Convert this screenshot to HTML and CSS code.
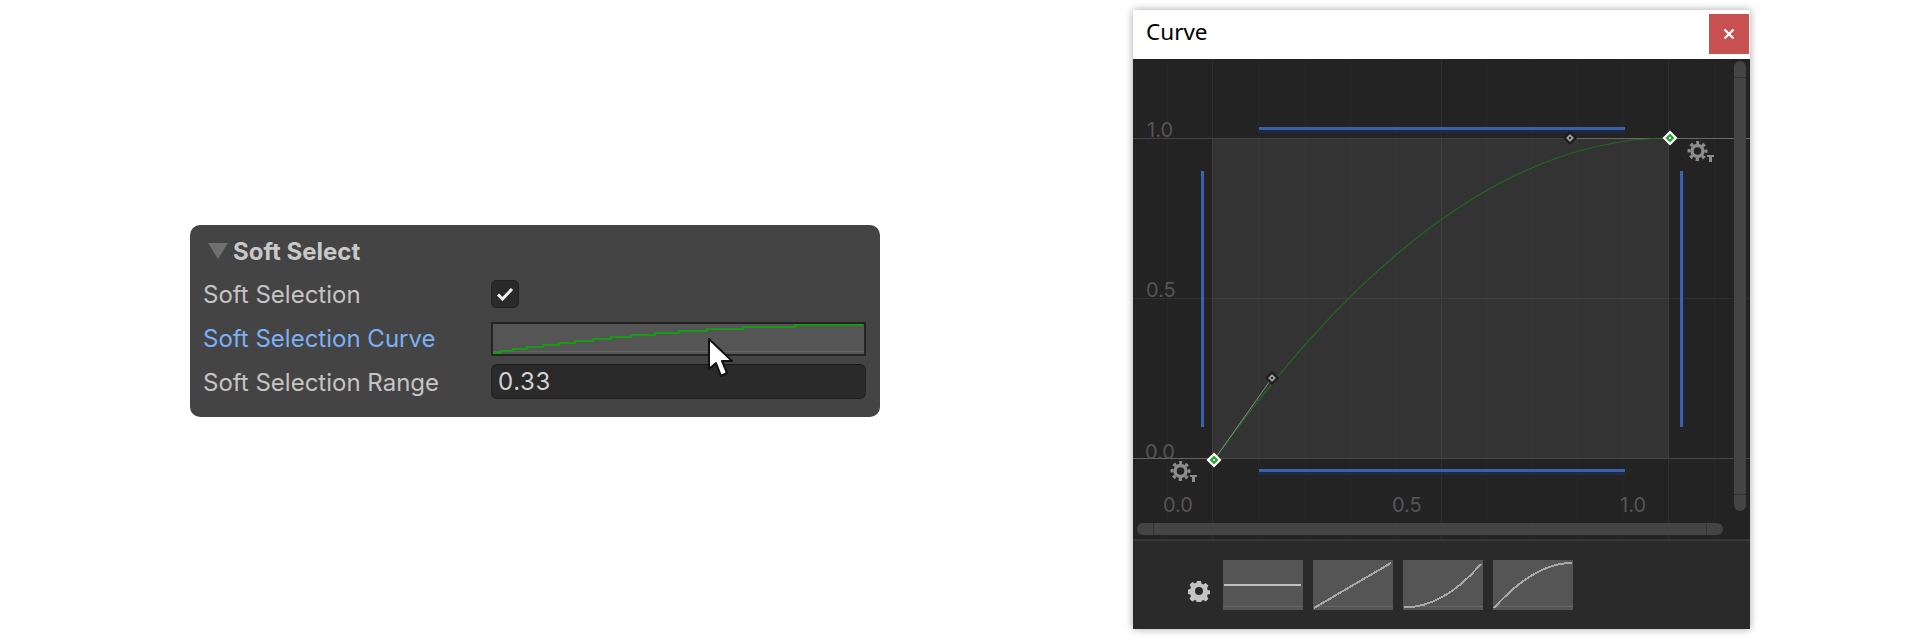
FILE: index.html
```html
<!DOCTYPE html>
<html lang="en">
<head>
    <meta charset="UTF-8">
    <meta name="viewport" content="width=device-width, initial-scale=1.0">
    <title>Soft Select Curve</title>
    <link rel="stylesheet" href="styles.css">
</head>
<body>
    <section class="inspector">
        <div class="inspector-head">
            <span class="fold"></span>
            <h2>Soft Select</h2>
        </div>
        <div class="prop">
            <label>Soft Selection</label>
            <span class="checkbox">
                <svg width="18" height="16" viewBox="0 0 18 16"><path d="M2 8.5 L6.5 13 L16 3" fill="none" stroke="#eee" stroke-width="3"/></svg>
            </span>
        </div>
        <div class="prop">
            <label class="active">Soft Selection Curve</label>
            <span class="curve-field">
                <svg width="371" height="30" viewBox="0 0 371 30" shape-rendering="crispEdges">
                    <rect x="0" y="27" width="371" height="1" fill="#636363"/>
                    <path d="M0 28H7V26H20V24H34V22H50V20H66V18H82V16H100V14H118V12H138V10H162V8H186V6H214V4H250V2H302V0H370" transform="translate(0 1)" fill="none" stroke="#189a18" stroke-width="2"/>
                </svg>
            </span>
        </div>
        <div class="prop">
            <label>Soft Selection Range</label>
            <span class="number-field">0.33</span>
        </div>
        <svg class="pointer" width="28" height="42" viewBox="0 0 28 42">
            <path d="M2 2 L2 32 L9 26 L14 39 L20 36 L15 24 L25 24 Z" fill="#fff" stroke="#111" stroke-width="2" stroke-linejoin="round"/>
        </svg>
    </section>

    <section class="window">
        <header class="titlebar">
            <span class="title">Curve</span>
            <button class="close">
                <svg width="12" height="12" viewBox="0 0 12 12"><path d="M1.5 1.5 L10.5 10.5 M10.5 1.5 L1.5 10.5" stroke="#fff" stroke-width="2.2"/></svg>
            </button>
        </header>

        <div class="graph">
            <svg class="graph-art" width="617" height="480" viewBox="1133 59 617 480">
                <!-- curve range -->
                <rect x="1212" y="138" width="457" height="320" fill="#333"/>
                <g shape-rendering="crispEdges">
                    <path d="M1167.5 59V539M1258.5 59V539M1305.500 59V539M1350.5 59V539M1395.5 59V539M1486.5 59V539M1531.5 59V539M1577.5 59V539M1622.5 59V539M1714.5 59V539" stroke="#fff" stroke-opacity="0.02"/>
                    <path d="M1212.5 59V539M1441.5 59V539M1668.5 59V539M1133 298.5H1750" stroke="#fff" stroke-opacity="0.055"/>
                    <path d="M1212 458.5H1750" stroke="#474747"/>
                    <path d="M1133 138.5H1570" stroke="#424242"/>
                    <path d="M1570 138.5H1750" stroke="#6a6a6a"/>
                    <path d="M1133 458.5H1212" stroke="#666"/>

                    <!-- wrap mode handles -->
                    <rect x="1259" y="130" width="366" height="3" fill="#1e2a44"/>
                    <rect x="1259" y="127" width="366" height="3" fill="#3a62ac"/>
                    <rect x="1259" y="472" width="366" height="3" fill="#1e2a44"/>
                    <rect x="1259" y="469" width="366" height="3" fill="#3a62ac"/>
                    <rect x="1201" y="171" width="3" height="256" fill="#3a62ac"/>
                    <rect x="1680" y="171" width="3" height="256" fill="#3a62ac"/>
                    <rect x="1683" y="171" width="1" height="256" fill="#1e2a44"/>
                </g>

                <path d="M1214 460 C1366 246.7 1518 138 1670 138" fill="none" stroke="#1f6a1f" stroke-width="1.2"/>
                <path d="M1214 460 L1272 378" stroke="#7f8f7f" stroke-width="1"/>

                <use href="#cog" x="1687" y="141"/>
                <use href="#cog" x="1170" y="461"/>

                <use href="#handle" x="1570" y="138"/>
                <use href="#handle" x="1272" y="378"/>
                <use href="#key" x="1670" y="138"/>
                <use href="#key" x="1214" y="460"/>

                <defs>
                    <g id="handle">
                        <path d="M0 -7 L7 0 L0 7 L-7 0 Z" fill="#1c1c1c"/>
                        <path d="M0 -4 L4 0 L0 4 L-4 0 Z" fill="#999"/>
                        <rect x="-1" y="-1" width="2" height="2" fill="#2a2a2a"/>
                    </g>
                    <g id="key">
                        <path d="M0 -7.5 L7.5 0 L0 7.5 L-7.5 0 Z" fill="#fff"/>
                        <path d="M0 -4.5 L4.5 0 L0 4.5 L-4.5 0 Z" fill="#2ea33a"/>
                        <rect x="-1" y="-1" width="2" height="2" fill="#ddd"/>
                    </g>
                    <g id="cog">
                        <circle cx="10.5" cy="10" r="5.5" fill="none" stroke="#8d8d8d" stroke-width="3.4"/>
                        <circle cx="10.5" cy="10" r="8.5" fill="none" stroke="#8d8d8d" stroke-width="3" stroke-dasharray="3.4 3.28" stroke-dashoffset="1.7" transform="rotate(-90 10.5 10)"/>
                        <path d="M20 14h7v2h-2v5h-3v-5h-2z" fill="#8d8d8d" shape-rendering="crispEdges"/>
                    </g>
                </defs>
            </svg>

            <span class="tick y-one">1.0</span>
            <span class="tick y-half">0.5</span>
            <span class="tick y-zero">0.0</span>
            <span class="tick x-zero">0.0</span>
            <span class="tick x-half">0.5</span>
            <span class="tick x-one">1.0</span>

            <div class="scroll scroll-v"><i></i><i></i></div>
            <div class="scroll scroll-h"><i></i><i></i></div>
        </div>

        <footer class="presets">
            <svg class="presets-gear" width="22" height="22" viewBox="0 0 22 22">
                <path fill-rule="evenodd" fill="#c4c4c4" d="M9 1h4l.6 2.8 1.6.7 2.500-1.500 2.800 2.800-1.500 2.500.7 1.600 2.800.6v3.500l-2.800.6-.7 1.600 1.500 2.500-2.800 2.800-2.500-1.500-1.600.7-.6 2.800H9l-.6-2.800-1.600-.7-2.500 1.500-2.800-2.800 1.500-2.500-.7-1.600-2.800-.6V9.500l2.800-.6.7-1.600-1.500-2.500 2.800-2.800 2.500 1.500 1.600-.7z M11 7a4 4 0 1 0 0 8 4 4 0 0 0 0-8z"/>
            </svg>
            <svg class="preset" width="80" height="50" viewBox="0 0 80 50">
                <rect y="46" width="80" height="1" fill="#666"/>
                <path d="M1 25H78" stroke="#c0c0c0" stroke-width="2" fill="none"/>
            </svg>
            <svg class="preset" width="80" height="50" viewBox="0 0 80 50" shape-rendering="crispEdges">
                <rect y="46" width="80" height="1" fill="#666"/>
                <path d="M1 48L78 3" stroke="#a8a8a8" stroke-width="2" fill="none"/>
            </svg>
            <svg class="preset" width="80" height="50" viewBox="0 0 80 50" shape-rendering="crispEdges">
                <rect y="46" width="80" height="1" fill="#666"/>
                <path d="M1 47.500C27 47.500 53 33 78 4" stroke="#a8a8a8" stroke-width="2" fill="none"/>
            </svg>
            <svg class="preset" width="80" height="50" viewBox="0 0 80 50" shape-rendering="crispEdges">
                <rect y="46" width="80" height="1" fill="#666"/>
                <path d="M1 48C27 19 53 3 79 3" stroke="#a8a8a8" stroke-width="2" fill="none"/>
            </svg>
        </footer>
    </section>
</body>
</html>
```

FILE: styles.css
```css
html, body {
    margin: 0;
    height: 640px;
    overflow: hidden;
    background-color: #fff;
}
body {
    font-family: Inter, "Liberation Sans", sans-serif;
    display: flex;
    align-items: flex-start;
    padding-left: 190px;
    box-sizing: border-box;
}
.inspector {
    position: relative;
    width: 690px;
    height: 192px;
    margin-top: 225px;
    box-sizing: border-box;
    padding: 10px 14px 0 13px;
    background-color: #444;
    border-radius: 10px;
    color: #c4c4c4;
    font-size: 24px;
}
.inspector-head {
    display: flex;
    align-items: center;
    height: 32px;
    padding-left: 5px;
    margin-bottom: 9px;
}
.inspector-head h2 {
    margin: 0 0 0 5px;
    font-size: 24px;
    font-weight: 700;
    color: #c8c8c8;
}
.fold {
    width: 0;
    height: 0;
    border-left: 10px solid transparent;
    border-right: 10px solid transparent;
    border-top: 16px solid #6f6f6f;
}
.prop {
    display: flex;
    align-items: center;
    height: 36px;
    margin-bottom: 8px;
}
.prop:last-of-type {
    margin-bottom: 0;
}
.prop label {
    width: 288px;
    flex: none;
}
.prop label.active {
    color: #7cb0f5;
}
.checkbox {
    display: flex;
    align-items: center;
    justify-content: center;
    width: 28px;
    height: 28px;
    box-sizing: border-box;
    background-color: #2a2a2a;
    border: 1px solid #212121;
    border-radius: 5px;
}
.curve-field {
    display: block;
    align-self: flex-end;
    width: 375px;
    height: 34px;
    box-sizing: border-box;
    background-color: #555;
    border: 2px solid #232323;
}
.curve-field svg,
.preset,
.presets-gear {
    display: block;
}
.number-field {
    display: flex;
    align-items: center;
    align-self: flex-start;
    width: 375px;
    height: 35px;
    box-sizing: border-box;
    padding-left: 6px;
    background-color: #2a2a2a;
    border: 1px solid #212121;
    border-top-color: #1a1a1a;
    border-radius: 6px;
    color: #d2d2d2;
    font-size: 24px;
    letter-spacing: 0.6px;
}
.pointer {
    position: absolute;
    left: 517px;
    top: 112px;
}
.window {
    width: 617px;
    height: 619px;
    margin: 10px 0 0 253px;
    display: flex;
    flex-direction: column;
    background-color: #2a2a2a;
    box-shadow: 0 0 8px rgba(0, 0, 0, 0.35);
}
.titlebar {
    display: flex;
    align-items: flex-start;
    justify-content: space-between;
    height: 49px;
    background-color: #fff;
}
.title {
    padding: 6px 0 0 13px;
    font-family: "Noto Sans", "Open Sans", sans-serif;
    font-size: 22.5px;
    color: #000;
}
.close {
    display: flex;
    align-items: center;
    justify-content: center;
    width: 40px;
    height: 40px;
    margin: 4px 1px 0 0;
    padding: 0;
    border: none;
    background-color: #c75050;
}
.graph {
    position: relative;
    height: 480px;
    background-color: #232323;
    border-bottom: 2px solid #373737;
    overflow: hidden;
}
.graph-art {
    display: block;
}
.tick {
    position: absolute;
    font-size: 20px;
    line-height: 24px;
    color: #555;
}
.y-one { left: 14px; top: 59px; }
.y-half { left: 13px; top: 219px; }
.y-zero { left: 12px; top: 381px; }
.x-zero { left: 30px; top: 434px; }
.x-half { left: 259px; top: 434px; }
.x-one { left: 487px; top: 434px; }
.scroll {
    position: absolute;
    display: flex;
    justify-content: space-between;
    box-sizing: border-box;
    background-color: #444;
    border-radius: 7px;
}
.scroll i {
    display: block;
    background-color: #333;
}
.scroll-v {
    left: 601px;
    top: 2px;
    width: 12px;
    height: 450px;
    flex-direction: column;
    padding: 16px 0;
}
.scroll-v i {
    height: 1px;
}
.scroll-h {
    left: 4px;
    top: 464px;
    width: 586px;
    height: 12px;
    padding: 0 16px;
}
.scroll-h i {
    width: 1px;
}
.presets {
    display: flex;
    align-items: flex-start;
    gap: 10px;
    flex: 1;
    padding: 19px 0 0 90px;
}
.presets-gear {
    margin: 20px 3px 0 -35px;
}
.preset {
    background-color: #555;
}
```
